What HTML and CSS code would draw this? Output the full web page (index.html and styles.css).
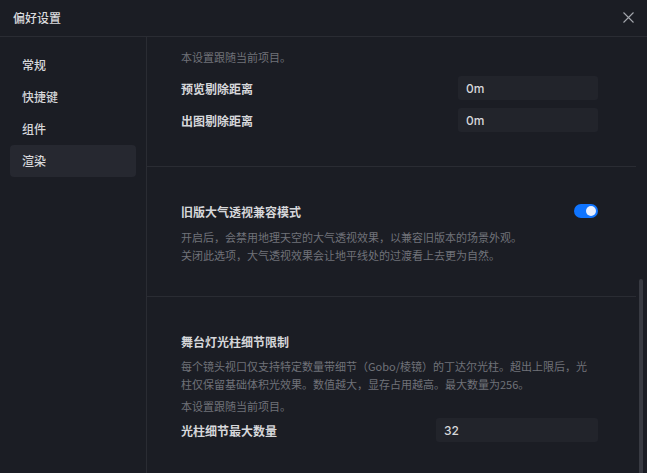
FILE: index.html
```html
<!DOCTYPE html>
<html lang="zh-CN">
<head>
    <meta charset="UTF-8">
    <meta name="viewport" content="width=device-width, initial-scale=1.0">
    <title>偏好设置</title>
    <link rel="stylesheet" href="styles.css">
</head>
<body>
    <div class="dialog">
        <div class="dialog-header">
            <h3>偏好设置</h3>
            <button class="close" aria-label="关闭">
                <svg width="11" height="11" viewBox="0 0 11 11"><path d="M0.5 0.5 L10.5 10.5 M10.5 0.5 L0.5 10.5" stroke="#a4a7ad" stroke-width="1.1" fill="none"/></svg>
            </button>
        </div>

        <div class="dialog-body">
            <ul class="side-nav">
                <li>常规</li>
                <li>快捷键</li>
                <li>组件</li>
                <li class="active">渲染</li>
            </ul>

            <div class="content">
                <div class="pane">
                    <div class="section section-first">
                        <p class="hint">本设置跟随当前项目。</p>
                        <div class="row row-top">
                            <span class="label">预览剔除距离</span>
                            <input type="text" class="box" value="0m">
                        </div>
                        <div class="row">
                            <span class="label">出图剔除距离</span>
                            <input type="text" class="box" value="0m">
                        </div>
                    </div>

                    <div class="section">
                        <div class="row title-row">
                            <span class="label">旧版大气透视兼容模式</span>
                            <span class="switch on"><span class="knob"></span></span>
                        </div>
                        <p class="desc">开启后，会禁用地理天空的大气透视效果，以兼容旧版本的场景外观。<br>关闭此选项，大气透视效果会让地平线处的过渡看上去更为自然。</p>
                    </div>

                    <div class="section">
                        <div class="row title-row">
                            <span class="label">舞台灯光柱细节限制</span>
                        </div>
                        <p class="desc desc-tight">每个镜头视口仅支持特定数量带细节（Gobo/棱镜）的丁达尔光柱。超出上限后，光柱仅保留基础体积光效果。数值越大，显存占用越高。最大数量为256。</p>
                        <p class="hint hint-small">本设置跟随当前项目。</p>
                        <div class="row row-tight">
                            <span class="label">光柱细节最大数量</span>
                            <input type="text" class="box box-wide" value="32">
                        </div>
                    </div>
                </div>
                <div class="scrollbar"><div class="thumb"></div></div>
            </div>
        </div>
    </div>
</body>
</html>
```

FILE: styles.css
```css
* {
    box-sizing: border-box;
}
html, body {
    margin: 0;
    height: 100%;
}
body {
    font-family: "Noto Sans CJK SC", "Noto Sans", sans-serif;
    background: #1b1d24;
    color: #d6d7da;
    overflow: hidden;
}
.dialog {
    display: flex;
    flex-direction: column;
    height: 473px;
}
.dialog-header {
    height: 37px;
    border-bottom: 1px solid #2a2c33;
    display: flex;
    align-items: center;
    justify-content: space-between;
    padding: 0 13px 2px 13px;
}
.dialog-header h3 {
    margin: 0;
    font-size: 12px;
    font-weight: 500;
    color: #d8d9dc;
}
.close {
    background: none;
    border: none;
    padding: 0;
    display: flex;
    cursor: pointer;
}
.dialog-body {
    flex: 1;
    display: flex;
    min-height: 0;
}
.side-nav {
    list-style: none;
    margin: 0;
    padding: 12px 10px 0 10px;
    width: 147px;
    border-right: 1px solid #2a2c33;
}
.side-nav li {
    height: 32px;
    line-height: 32px;
    padding-left: 12px;
    font-size: 12px;
    font-weight: 500;
    color: #d6d7da;
    border-radius: 4px;
}
.side-nav li.active {
    background: #262830;
}
.content {
    flex: 1;
    display: flex;
    position: relative;
}
.pane {
    width: 489px;
}
.section {
    padding: 34px 38px 32px 34px;
    border-bottom: 1px solid #2a2c33;
}
.section-first {
    padding-top: 11px;
    padding-bottom: 34px;
}
.row {
    display: flex;
    align-items: center;
    justify-content: space-between;
    margin-top: 8px;
}
.row-top {
    margin-top: 10px;
}
.row-tight {
    margin-top: 3px;
}
.title-row {
    margin-top: 0;
    height: 20px;
}
.label {
    font-size: 12px;
    font-weight: 600;
    color: #d6d7da;
}
.box {
    width: 140px;
    height: 24px;
    padding: 0 8px;
    border: none;
    border-radius: 3px;
    background: #22242b;
    color: #d6d7da;
    font-family: "Inter", "Noto Sans", sans-serif;
    font-size: 12px;
    font-weight: 500;
    outline: none;
}
.box-wide {
    width: 162px;
}
.hint {
    margin: 0;
    font-size: 11px;
    line-height: 18px;
    color: #707279;
}
.hint-small {
    margin-top: 4px;
}
.desc {
    margin: 7px 0 0 0;
    font-size: 11px;
    line-height: 18px;
    color: #707279;
}
.desc-tight {
    line-height: 17.5px;
}
.switch {
    width: 24px;
    height: 14px;
    border-radius: 7px;
    background: #3a3d45;
    display: flex;
    align-items: center;
    padding: 2px;
}
.switch.on {
    background: #0f74ff;
    justify-content: flex-end;
}
.knob {
    width: 10px;
    height: 10px;
    border-radius: 50%;
    background: #e6eeff;
}
.scrollbar {
    flex: 1;
    display: flex;
    justify-content: flex-end;
    padding: 242px 4px 0 0;
}
.thumb {
    width: 4px;
    height: 200px;
    border-radius: 2px;
    background: #383a42;
}
```
